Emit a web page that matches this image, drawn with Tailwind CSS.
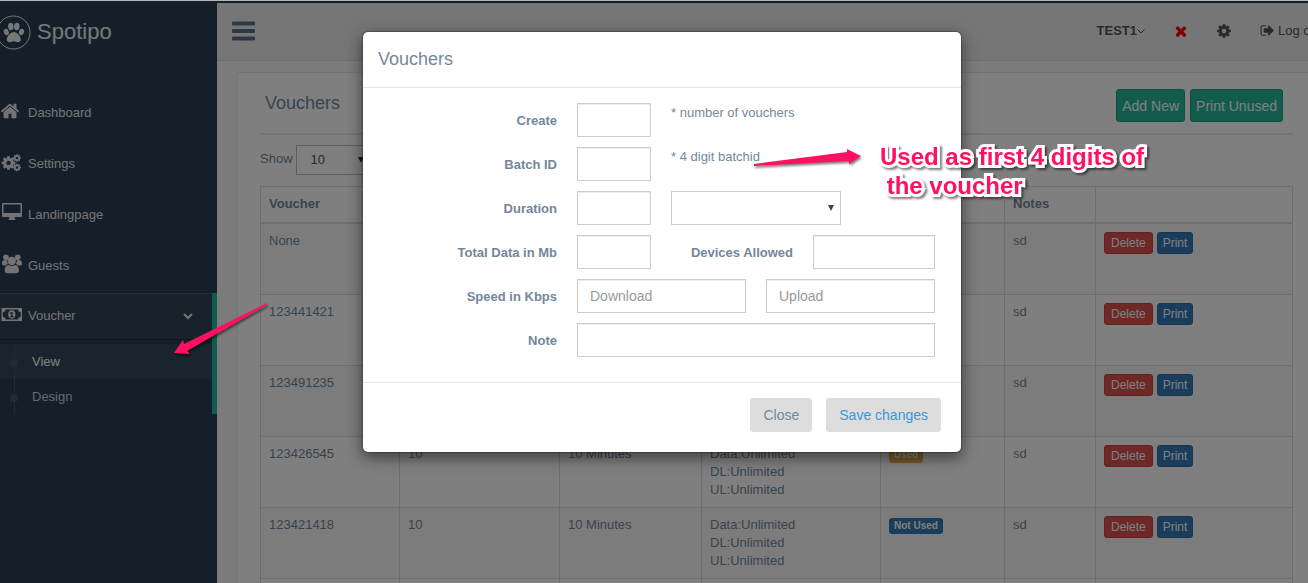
<!DOCTYPE html>
<html lang="en">
<head>
<meta charset="utf-8">
<meta name="viewport" content="width=device-width, initial-scale=1">
<title>Vouchers</title>
<script src="https://cdn.jsdelivr.net/npm/@tailwindcss/browser@4"></script>
</head>
<body class="relative h-screen overflow-hidden bg-[#2A3F54] font-['Liberation_Sans',Arial,sans-serif] text-[13px] leading-[18px] text-[#73879C]">
<svg class="hidden">
  <symbol id="cog" viewBox="0 0 1792 1792"><path d="M1152 896q0-106-75-181t-181-75-181 75-75 181 75 181 181 75 181-75 75-181zm512-109v222q0 12-8 23t-20 13l-185 28q-19 54-39 91 35 50 107 138 10 12 10 25t-9 23q-27 37-99 108t-94 71q-12 0-26-9l-138-108q-44 23-91 38-16 136-29 186-7 28-36 28h-222q-14 0-24.5-8.5t-11.5-21.5l-28-184q-49-16-90-37l-141 107q-10 9-25 9-14 0-25-11-126-114-165-168-7-10-7-23 0-12 8-23 15-21 51-66.5t54-70.5q-27-50-41-99l-183-27q-13-2-21-12.5t-8-23.5v-222q0-12 8-23t19-13l186-28q14-46 39-92-40-57-107-138-10-12-10-24 0-10 9-23 26-36 98.5-107.5t94.5-71.5q13 0 26 10l138 107q44-23 91-38 16-136 29-186 7-28 36-28h222q14 0 24.5 8.5t11.5 21.5l28 184q49 16 90 37l142-107q9-9 24-9 13 0 25 10 129 119 165 170 7 8 7 22 0 12-8 23-15 21-51 66.5t-54 70.5q26 50 41 98l183 28q13 2 21 12.5t8 23.5z"/></symbol>
</svg>

<div class="flex h-full w-[calc(100%+16px)] pt-[3px]">
  <aside class="w-[217px] shrink-0 text-[#E7E7E7]">
    <a href="#" class="flex h-[58px] items-center gap-[6px] text-[22px] leading-none text-[#ECF0F1]">
      <svg class="-ml-1 h-[35px] w-[35px]" viewBox="0 0 35 35" fill="currentColor">
        <circle cx="17.500" cy="17.500" r="16.500" fill="none" stroke="currentColor"/>
        <ellipse cx="10.300" cy="17" rx="2.500" ry="3.200" transform="rotate(-20 10.300 17)"/>
        <ellipse cx="14.800" cy="11.500" rx="2.700" ry="3.700" transform="rotate(-8 14.800 11.500)"/>
        <ellipse cx="20.800" cy="11.500" rx="2.700" ry="3.700" transform="rotate(8 20.800 11.500)"/>
        <ellipse cx="25.500" cy="17" rx="2.500" ry="3.200" transform="rotate(20 25.500 17)"/>
        <path d="M17.800 17c3.300 0 7 4.600 7 7.500 0 2-1.300 2.700-3 2.700-1.600 0-2.600-.9-4-.9s-2.500.9-4 .9c-1.700 0-3-.7-3-2.700 0-2.900 3.700-7.500 7-7.500z"/>
      </svg>
      <span>Spotipo</span>
    </a>
    <nav class="mt-[26px]">
      <a href="#" class="flex h-[51px] items-center gap-2">
        <svg class="mb-[3px] h-5 w-5" viewBox="0 0 1792 1792" fill="currentColor"><path d="M1472 992v480q0 26-19 45t-45 19h-384v-384h-256v384h-384q-26 0-45-19t-19-45v-480q0-1 .5-3t.5-3l575-474 575 474q1 2 1 6zm223-69l-62 74q-8 9-21 11h-3q-13 0-21-7l-692-577-692 577q-12 8-24 7-13-2-21-11l-62-74q-8-10-7-23.500t11-21.500l719-599q32-26 76-26t76 26l244 204v-195q0-14 9-23t23-9h192q14 0 23 9t9 23v408l219 182q10 8 11 21.500t-7 23.500z"/></svg>
        <span>Dashboard</span>
      </a>
      <a href="#" class="flex h-[51px] items-center gap-[6px]">
        <svg class="mb-[2px] h-5 w-[22px]" viewBox="0 0 22 20" fill="currentColor">
          <use href="#cog" x="0.500" y="2" width="16" height="16"/>
          <use href="#cog" x="12.500" y="0.500" width="9" height="9"/>
          <use href="#cog" x="12.500" y="10" width="9" height="9"/>
        </svg>
        <span>Settings</span>
      </a>
      <a href="#" class="flex h-[51px] items-center gap-[6px]">
        <svg class="mb-[5px] h-5 w-[22px]" viewBox="0 0 22 20" fill="currentColor"><path fill-rule="evenodd" d="M3.200 1h17.600a1.200 1.200 0 0 1 1.200 1.200v11.600a1.200 1.200 0 0 1-1.200 1.200H14.500l.4 1.900c.5.200.8.500.8 1.100H8.300c0-.6.300-.9.800-1.100L9.500 15H3.200A1.200 1.200 0 0 1 2 13.800V2.200A1.200 1.200 0 0 1 3.200 1zm.3 1.400v8.500h17V2.400z"/></svg>
        <span>Landingpage</span>
      </a>
      <a href="#" class="flex h-[51px] items-center gap-[6px]">
        <svg class="mb-1 h-5 w-[22px]" viewBox="0 0 22 20" fill="currentColor">
          <circle cx="6" cy="3.300" r="2.800"/><circle cx="17.700" cy="3.300" r="2.800"/>
          <path d="M6.300 6.300C3.500 5.500 2 6.500 2 9.800c0 1.200.8 1.600 2 1.600h2c.5-.8 1-1.200 2-1.500-.7-1.200-.9-2.200-.9-3.600zM17.400 6.300c2.800-.8 4.600.2 4.600 3.500 0 1.200-.8 1.600-2 1.600h-2c-.5-.8-1.200-1.200-2.200-1.500.8-1.200 1-2.200 1-3.600z"/>
          <circle cx="11.800" cy="7" r="4.200"/>
          <path d="M8.600 11c2 1.400 4.400 1.400 6.400 0 3 .3 3.900 2.800 3.900 5.800 0 1.600-1 2.500-2.500 2.500H7.200c-1.500 0-2.500-.9-2.500-2.500 0-3 .9-5.500 3.900-5.800z"/>
        </svg>
        <span>Guests</span>
      </a>
      <div class="mt-[2px] border-r-[5px] border-[#1ABB9C]">
        <a href="#" class="flex h-[46px] items-center gap-[6px] bg-linear-to-b from-[#334556] to-[#2C4257] shadow-[inset_0_1px_0_rgba(255,255,255,0.16),0_1px_0_rgba(0,0,0,0.25)]">
          <svg class="mb-1 h-5 w-[22px]" viewBox="0 0 22 20" fill="currentColor"><path fill-rule="evenodd" d="M1.500 4H22v13H1.500zM5.500 5.500a2.600 2.600 0 0 1-2.600 2.600v4.800a2.600 2.600 0 0 1 2.600 2.600h12.600a2.600 2.600 0 0 1 2.600-2.600V8.100a2.600 2.600 0 0 1-2.600-2.600z"/><path fill-rule="evenodd" d="M11.800 6.300c2.300 0 3.700 2 3.700 4.200s-1.400 4.200-3.700 4.200-3.700-2-3.700-4.200 1.400-4.200 3.700-4.200zm-.5 1.700-1.600 1.200.7.900.8-.6v2.700h-1.100v1.100H13.700v-1.100h-1.100V8z"/></svg>
          <span class="flex-1">Voucher</span>
          <svg class="mr-[19px] h-[10px] w-[10px]" viewBox="0 0 10 10" fill="none" stroke="currentColor" stroke-width="2"><path d="M1 3l4 4 4-4"/></svg>
        </a>
        <ul class="mt-[5px]">
          <li><a href="#" class="flex h-[35px] items-center bg-white/5 text-white">
            <svg class="mr-[10px] h-[35px] w-[22px]" viewBox="0 0 22 35"><path d="M14.500 0v35" stroke="#425668"/><circle cx="14" cy="19" r="4" fill="#425668"/></svg>View</a></li>
          <li><a href="#" class="flex h-[35px] items-center text-white/75">
            <svg class="mr-[10px] h-[35px] w-[22px]" viewBox="0 0 22 35"><path d="M14.500 0v35" stroke="#425668"/><circle cx="14" cy="19" r="4" fill="#425668"/></svg>Design</a></li>
        </ul>
      </div>
    </nav>
  </aside>

  <main class="min-w-0 flex-1 bg-[#F7F7F7]">
    <header class="flex h-[58px] items-center justify-between border-b border-[#D9DEE4] bg-[#EDEDED] pb-[2px] pl-[15px] text-[#515356]">
      <button type="button" aria-label="Toggle menu">
        <svg class="h-5 w-[23px]" viewBox="0 0 23 20" fill="#5A738E"><rect y="0.500" width="23" height="4" rx="1"/><rect y="8" width="23" height="4" rx="1"/><rect y="15.500" width="23" height="4" rx="1"/></svg>
      </button>
      <div class="flex items-center">
        <button type="button" class="flex items-center font-bold">TEST1
          <svg class="mt-px h-2 w-2" viewBox="0 0 8 8" fill="none" stroke="currentColor"><path d="M.5 2.500L4 6l3.500-3.500"/></svg></button>
        <button type="button" aria-label="Remove" class="ml-7"><svg class="h-4 w-4" viewBox="0 0 1792 1792" fill="#ff0000"><path d="M1490 1322q0 40-28 68l-136 136q-28 28-68 28t-68-28l-294-294-294 294q-28 28-68 28t-68-28l-136-136q-28-28-28-68t28-68l294-294-294-294q-28-28-28-68t28-68l136-136q28-28 68-28t68 28l294 294 294-294q28-28 68-28t68 28l136 136q28 28 28 68t-28 68l-294 294 294 294q28 28 28 68z"/></svg></button>
        <button type="button" aria-label="Preferences" class="ml-[27px]"><svg class="h-4 w-4" fill="currentColor"><use href="#cog"/></svg></button>
        <a href="#" class="ml-7 flex w-[64px] items-center gap-[3px] whitespace-nowrap"><svg class="h-[15px] w-[15px] shrink-0" viewBox="0 0 1792 1792" fill="currentColor"><path d="M704 1440q0 4 1 20t.5 26.500-3 23.500-10 19.500-20.500 6.500h-320q-119 0-203.500-84.500t-84.500-203.500v-704q0-119 84.500-203.500t203.500-84.500h320q13 0 22.500 9.500t9.500 22.500q0 4 1 20t.5 26.500-3 23.500-10 19.500-20.500 6.500h-320q-66 0-113 47t-47 113v704q0 66 47 113t113 47h312l11.500 1 11.500 3 8 5.500 7 9 2 13.500zm928-544q0 26-19 45l-544 544q-19 19-45 19t-45-19-19-45v-288h-448q-26 0-45-19t-19-45v-384q0-26 19-45t45-19h448v-288q0-26 19-45t45-19 45 19l544 544q19 19 19 45z"/></svg>Log out</a>
      </div>
    </header>

    <section class="mt-[11px] mr-2 ml-5 border border-[#E6E9ED] bg-white px-[22px] pt-4">
      <div class="flex h-[46px] items-start justify-between border-b-2 border-[#E6E9ED] pr-[10px] pl-[5px]">
        <h2 class="pt-1 text-[18px] leading-5">Vouchers</h2>
        <div class="flex gap-[5px] text-[14px] text-white">
          <button type="button" class="h-[33px] rounded-[3px] border border-[#169F85] bg-[#26B99A] px-[5px]">Add New</button>
          <button type="button" class="h-[33px] rounded-[3px] border border-[#169F85] bg-[#26B99A] px-[5px]">Print Unused</button>
        </div>
      </div>
      <div class="mt-[10px] flex items-start gap-[3px]">
        <label for="length" class="pt-[5px]">Show</label>
        <span class="relative">
          <select id="length" class="h-[30px] w-[75px] appearance-none border border-[#bbb] bg-white pl-[14px] text-[13px] text-[#555]"><option>10</option><option>25</option></select>
          <svg class="pointer-events-none absolute top-3 right-[7px] h-[6px] w-[6px]" viewBox="0 0 6 6" fill="#333"><path d="M0 0h6L3 6z"/></svg>
        </span>
      </div>
      <table class="mt-[11px] w-full table-fixed border-collapse border border-[#ddd] text-left [&_td]:h-[71px] [&_td]:border [&_td]:border-[#ddd] [&_td]:p-2 [&_td]:align-top [&_th]:border [&_th]:border-b-2 [&_th]:border-[#ddd] [&_th]:p-2 [&_th]:pb-[9px]">
        <colgroup><col class="w-[139px]"><col class="w-[160px]"><col class="w-[142px]"><col class="w-[179px]"><col class="w-[124px]"><col class="w-[91px]"><col></colgroup>
        <thead><tr><th>Voucher</th><th>Batch ID</th><th>Duration</th><th>Limits</th><th>Status</th><th>Notes</th><th></th></tr></thead>
        <tbody id="rows"></tbody>
      </table>
    </section>
  </main>
</div>

<template id="row">
  <tr class="odd:bg-[#f9f9f9]">
    <td></td><td>10</td><td>10 Minutes</td><td>Data:Unlimited<br>DL:Unlimited<br>UL:Unlimited</td>
    <td><span class="mt-px inline-block rounded-[3px] px-[5px] text-[10px] leading-4 font-bold text-white"></span></td>
    <td>sd</td>
    <td><div class="flex gap-1 text-[12px] text-white">
      <button type="button" class="h-[22px] rounded-[3px] border border-[#d43f3a] bg-[#d9534f] px-[6px]">Delete</button>
      <button type="button" class="h-[22px] rounded-[3px] border border-[#2e6da4] bg-[#337ab7] px-[5px]">Print</button>
    </div></td>
  </tr>
</template>
<script>
  const template = document.getElementById('row');
  [['None', 0], ['123441421', 0], ['123491235', 0], ['123426545', 1], ['123421418', 0], ['', 0]].forEach(([code, used]) => {
    const row = template.content.cloneNode(true);
    row.querySelector('td').textContent = code;
    const badge = row.querySelector('span');
    badge.textContent = used ? 'Used' : 'Not Used';
    badge.classList.add(used ? 'bg-[#f0ad4e]' : 'bg-[#337ab7]');
    if (!code) row.querySelectorAll('td').forEach(cell => cell.replaceChildren());
    document.getElementById('rows').append(row);
  });
</script>

<div class="absolute inset-0 bg-black/50"></div>
<div class="absolute inset-x-0 top-0 h-px bg-[#b4b8ba]"></div>

<div class="absolute top-[31px] left-0 flex w-[calc(100%+16px)] justify-center">
  <form role="dialog" aria-labelledby="dialog-title" class="w-[600px] rounded-md border border-black/20 bg-white bg-clip-padding shadow-[0_5px_15px_rgba(0,0,0,0.5)]">
    <h2 id="dialog-title" class="border-b border-[#e5e5e5] px-[15px] pt-[17px] pb-[18px] text-[18px] leading-5">Vouchers</h2>
    <div class="grid grid-cols-[180px_minmax(0,1fr)] items-center gap-x-5 gap-y-[10px] pt-[15px] pr-[26px] pb-[25px] pl-[14px] [&_input]:h-[34px] [&_input]:min-w-0 [&_input]:border [&_input]:border-[#ccc] [&_input]:px-3 [&_input]:text-[14px] [&_input]:text-[#555] [&_input]:shadow-[inset_0_1px_1px_rgba(0,0,0,0.075)] [&_input]:placeholder:text-[#999] [&_label]:pt-[2px] [&_label]:text-right [&_label]:font-bold">
      <label for="create">Create</label>
      <div class="flex gap-5"><input id="create" class="w-[74px]"><span class="pt-px">* number of vouchers</span></div>
      <label for="batch">Batch ID</label>
      <div class="flex gap-5"><input id="batch" class="w-[74px]"><span class="pt-px">* 4 digit batchid</span></div>
      <label for="duration">Duration</label>
      <div class="flex gap-5"><input id="duration" class="w-[74px]">
        <span class="relative"><select aria-label="Duration unit" class="h-[34px] w-[170px] appearance-none border border-[#ccc] bg-white px-3 text-[14px]"><option></option></select>
          <svg class="pointer-events-none absolute top-[14px] right-[7px] h-[6px] w-[6px]" viewBox="0 0 6 6" fill="#444"><path d="M0 0h6L3 6z"/></svg></span>
      </div>
      <label for="data">Total Data in Mb</label>
      <div class="flex items-center gap-5"><input id="data" class="w-[74px]"><label for="devices" class="flex-1">Devices Allowed</label><input id="devices" class="w-[122px]"></div>
      <label for="download">Speed in Kbps</label>
      <div class="flex gap-5"><input id="download" placeholder="Download" class="flex-1"><input aria-label="Upload speed" placeholder="Upload" class="flex-1"></div>
      <label for="note">Note</label>
      <div class="flex"><input id="note" class="flex-1"></div>
    </div>
    <div class="flex justify-end gap-[14px] border-t border-[#e5e5e5] px-5 pt-[15px] pb-5 text-[14px]">
      <button type="button" class="h-[34px] rounded-[3px] bg-[#ddd] px-[13px]">Close</button>
      <button type="submit" class="h-[34px] rounded-[3px] bg-[#ddd] px-[13px] text-[#3498DB]">Save changes</button>
    </div>
  </form>
</div>

<svg class="pointer-events-none absolute top-0 left-0 h-[583px] w-[1308px] drop-shadow-[1px_2px_1px_rgba(0,0,0,0.5)]" viewBox="0 0 1308 583" fill="#FF1060">
  <path d="M267 303L184 344L183 340L174 353L190 354L187 351L267 305Z"/>
  <path d="M754 164L847 152V149L861 156L849 164V161L754 166Z"/>
</svg>
<p class="pointer-events-none absolute top-[142px] left-[880px] text-[24px] leading-[29px] font-bold whitespace-pre text-[#FF1060] drop-shadow-[2px_2px_1px_rgba(0,0,0,0.5)] [-webkit-text-stroke:6px_white] [paint-order:stroke_fill]">Used as first 4 digits of
 the voucher</p>
</body>
</html>
